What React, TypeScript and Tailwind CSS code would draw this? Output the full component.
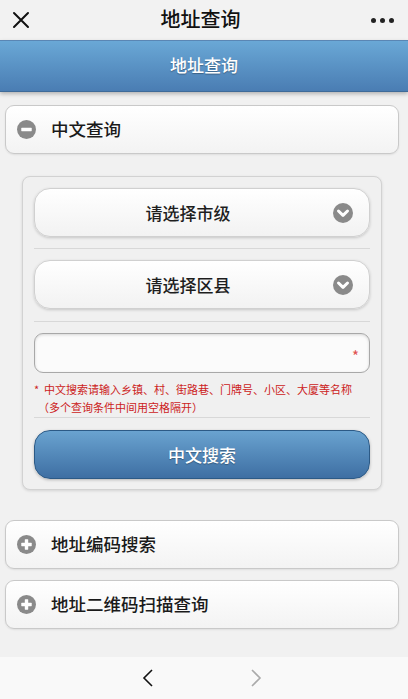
import React from "react";

const font = { fontFamily: '"Noto Sans CJK SC", "Noto Sans", sans-serif' };

function MinusIcon() {
  return (
    <svg width="19" height="19" viewBox="0 0 20 20">
      <circle cx="10" cy="10" r="10" fill="#8a8a8a" />
      <rect x="4.5" y="8.2" width="11" height="3.6" rx="0.5" fill="#fff" />
    </svg>
  );
}

function PlusIcon() {
  return (
    <svg width="19" height="19" viewBox="0 0 20 20">
      <circle cx="10" cy="10" r="10" fill="#8a8a8a" />
      <rect x="4.5" y="8.2" width="11" height="3.6" rx="0.5" fill="#fff" />
      <rect x="8.2" y="4.5" width="3.6" height="11" rx="0.5" fill="#fff" />
    </svg>
  );
}

function ChevronCircle() {
  return (
    <svg width="20" height="20" viewBox="0 0 20 20">
      <circle cx="10" cy="10" r="10" fill="#8a8a8a" />
      <path d="M5.5 8 L10 12.3 L14.5 8" stroke="#fff" strokeWidth="3" fill="none" strokeLinecap="round" strokeLinejoin="round" />
    </svg>
  );
}

function Collapsible({ open, label }: { open?: boolean; label: string }) {
  return (
    <div className="h-[49px] rounded-[9px] border border-[#c9c9c9] bg-gradient-to-b from-white to-[#f3f3f3] flex items-center pl-[11px] shadow-[0_1px_2px_rgba(0,0,0,0.08)]">
      {open ? <MinusIcon /> : <PlusIcon />}
      <span className="ml-[15px] text-[17.5px] font-medium text-[#1a1a1a]">{label}</span>
    </div>
  );
}

function Select({ label }: { label: string }) {
  return (
    <div className="relative h-[49px] rounded-[16px] border border-[#d0d0d0] bg-gradient-to-b from-white to-[#f2f2f2] shadow-[0_1px_3px_rgba(0,0,0,0.18)] flex items-center justify-center pr-[28px]">
      <span className="text-[17px] font-medium text-[#1e1e1e]">{label}</span>
      <div className="absolute right-[16px] top-1/2 -translate-y-1/2 flex">
        <ChevronCircle />
      </div>
    </div>
  );
}

export default function App() {
  return (
    <div className="w-[408px] h-[699px] bg-[#f1f1f1] flex flex-col overflow-hidden" style={font}>
      {/* top bar */}
      <div className="h-[40px] bg-[#f2f2f2] flex items-center justify-between px-[12px] shrink-0">
        <svg width="18" height="18" viewBox="0 0 18 18">
          <path d="M2 2 L16 16 M16 2 L2 16" stroke="#111" strokeWidth="2" strokeLinecap="round" />
        </svg>
        <span className="text-[20px] font-medium text-[#111] -mt-[2px]">地址查询</span>
        <div className="flex gap-[4px] pr-[2px]">
          <span className="w-[5px] h-[5px] rounded-full bg-[#222]" />
          <span className="w-[5px] h-[5px] rounded-full bg-[#222]" />
          <span className="w-[5px] h-[5px] rounded-full bg-[#222]" />
        </div>
      </div>
      {/* blue header */}
      <div className="h-[52px] bg-gradient-to-b from-[#6aa8d6] to-[#4a7db3] border-t border-[#5a86b4] border-b border-b-[#3f6b99] shadow-[0_2px_4px_rgba(0,0,0,0.25)] flex items-center justify-center shrink-0">
        <span className="text-[17px] font-medium text-white -mt-[2px] [text-shadow:0_1px_1px_rgba(0,0,0,0.3)]">地址查询</span>
      </div>

      <div className="pl-[5px] pr-[9px] pt-[13px] flex flex-col">
        <Collapsible open label="中文查询" />

        <div className="mx-[17px] mt-[22px] rounded-[8px] border border-[#d2d2d2] bg-[#f0f0f0] shadow-[0_1px_3px_rgba(0,0,0,0.12)] px-[11px]">
          <div className="py-[11px] border-b border-[#d8d8d8]">
            <Select label="请选择市级" />
          </div>
          <div className="pt-[11px] pb-[12px] border-b border-[#d8d8d8]">
            <Select label="请选择区县" />
          </div>
          <div className="pt-[11px] pb-[1px] border-b border-[#d8d8d8]">
            <div className="h-[40px] rounded-[9px] border border-[#a8a8a8] bg-[#fbfbfb] shadow-[inset_0_1px_3px_rgba(0,0,0,0.15)] flex items-center justify-end pr-[10px]">
              <span className="text-[#e05050] text-[15px] leading-none mt-[4px]">*</span>
            </div>
            <div className="mt-[7px] text-[11px] leading-[18px] text-[#cc2222]">
              <div>* &nbsp;中文搜索请输入乡镇、村、街路巷、门牌号、小区、大厦等名称</div>
              <div className="pl-[4px]">（多个查询条件中间用空格隔开）</div>
            </div>
          </div>
          <div className="pt-[12px] pb-[10px]">
            <div className="h-[49px] rounded-[16px] border border-[#2c5a86] bg-gradient-to-b from-[#6aa3d0] to-[#3e6fa3] shadow-[0_1px_3px_rgba(0,0,0,0.25)] flex items-center justify-center">
              <span className="text-[17px] font-medium text-white [text-shadow:0_1px_1px_rgba(0,0,0,0.3)]">中文搜索</span>
            </div>
          </div>
        </div>

        <div className="mt-[30px] flex flex-col gap-[11px]">
          <Collapsible label="地址编码搜索" />
          <Collapsible label="地址二维码扫描查询" />
        </div>
      </div>

      <div className="mt-auto h-[42px] bg-[#f9f9f9] flex items-center justify-center gap-[94px] pr-[4px] shrink-0">
        <svg width="14" height="20" viewBox="0 0 14 20">
          <path d="M11 2 L3 10 L11 18" stroke="#111" strokeWidth="1.6" fill="none" />
        </svg>
        <svg width="14" height="20" viewBox="0 0 14 20">
          <path d="M3 2 L11 10 L3 18" stroke="#aaa" strokeWidth="1.6" fill="none" />
        </svg>
      </div>
    </div>
  );
}
